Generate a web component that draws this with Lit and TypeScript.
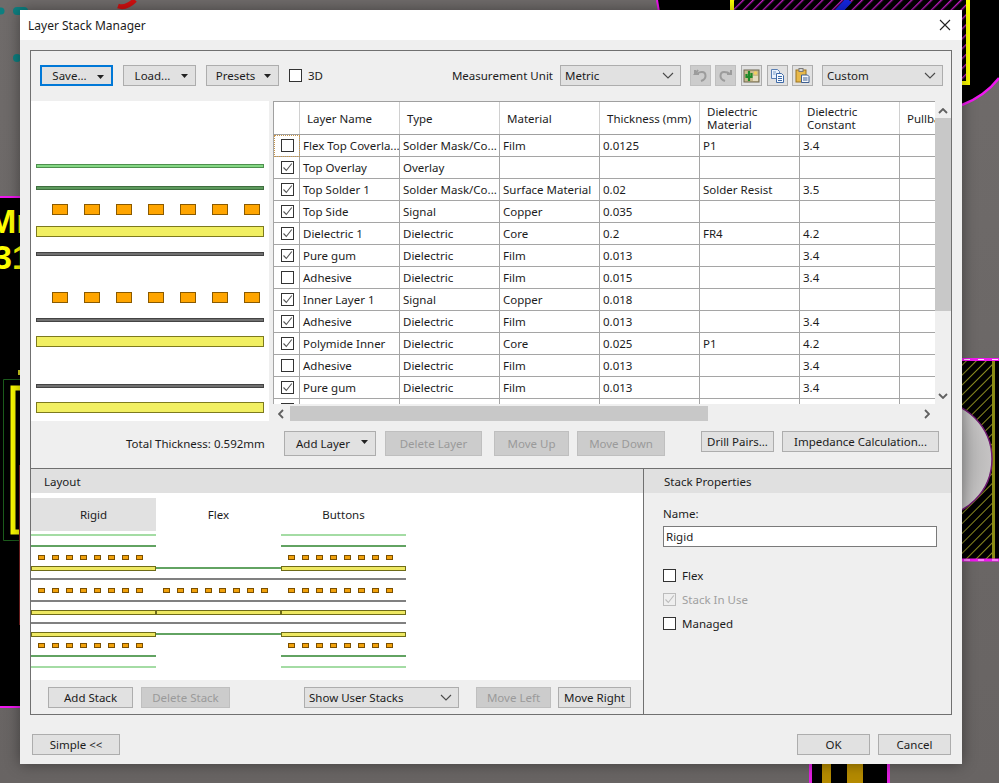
import { LitElement, html, css, svg } from "lit";
import { customElement } from "lit/decorators.js";

const rows = [
  ["Flex Top Coverla...", "Solder Mask/Co...", "Film", "0.0125", "P1", "3.4", 0],
  ["Top Overlay", "Overlay", "", "", "", "", 1],
  ["Top Solder 1", "Solder Mask/Co...", "Surface Material", "0.02", "Solder Resist", "3.5", 1],
  ["Top Side", "Signal", "Copper", "0.035", "", "", 1],
  ["Dielectric 1", "Dielectric", "Core", "0.2", "FR4", "4.2", 1],
  ["Pure gum", "Dielectric", "Film", "0.013", "", "3.4", 1],
  ["Adhesive", "Dielectric", "Film", "0.015", "", "3.4", 0],
  ["Inner Layer 1", "Signal", "Copper", "0.018", "", "", 1],
  ["Adhesive", "Dielectric", "Film", "0.013", "", "3.4", 1],
  ["Polymide Inner", "Dielectric", "Core", "0.025", "P1", "4.2", 1],
  ["Adhesive", "Dielectric", "Film", "0.013", "", "3.4", 0],
  ["Pure gum", "Dielectric", "Film", "0.013", "", "3.4", 1],
  ["", "", "", "", "", "", 1],
];

const G1 = ["#84d884", "#4f8f4f"];
const G2 = ["#5d9a5d", "#3f6f3f"];
const Y = ["#f1ef62", "#7d7a1e"];
const K = ["#707070", "#444444"];
const O = ["#ffa500", "#8a5a00"];

const bar = (x: number, y: number, w: number, h: number, c: string[]) =>
  svg`<rect x=${x + 0.5} y=${y + 0.5} width=${w - 1} height=${h - 1} fill=${c[0]} stroke=${c[1]} />`;

const previewPads = (y: number) =>
  [0, 1, 2, 3, 4, 5, 6].map((i) => bar(21 + i * 32, y, 16, 11, O));

const stackPads = (x: number, y: number) =>
  [0, 1, 2, 3, 4, 5, 6, 7].map((i) => bar(x + i * 14, y, 7, 5, ["#f2a20c", "#7a4f00"]));

const line = (x: number, y: number, w: number, c: string) =>
  svg`<rect x=${x} y=${y} width=${w} height="2" fill=${c} />`;

const ybar = (x: number, y: number, w: number) => bar(x, y, w, 5, ["#eee862", "#6f6c18"]);

const chevron = html`<svg class="chev" width="12" height="7" viewBox="0 0 12 7"><path d="M1 1l5 5 5-5" fill="none" stroke="#4a4a4a" stroke-width="1.1"/></svg>`;
const caret = html`<svg class="caret" width="7" height="4" viewBox="0 0 7 4"><path d="M0 0h7L3.500 4z" fill="#222"/></svg>`;

@customElement("app-root")
export class AppRoot extends LitElement {
  static styles = css`
    :host { display: block; position: relative; width: 999px; height: 783px; overflow: hidden; background: #6c6866;
      font-family: "Noto Sans", "Open Sans", sans-serif; font-size: 11.5px; color: #1c1c1c; }
    .canvas { position: absolute; left: 0; top: 0; display: block; }
    .dialog { position: absolute; left: 20px; top: 10px; width: 942px; height: 754px; background: #efefef;
      box-shadow: 0 0 14px rgba(0,0,0,.4); display: flex; flex-direction: column; }
    .title { height: 30px; background: #fff; display: flex; align-items: center; justify-content: space-between;
      padding: 0 11px 0 8px; font-size: 12px; flex: none; }
    .close { display: block; }
    .frame { margin: 10px 10px 0; height: 665px; box-sizing: border-box; border: 1px solid #707070; display: flex; flex-direction: column; }
    .toolbar { height: 21px; margin-top: 14px; padding: 0 8px 0 9px; display: flex; align-items: center; flex: none; }
    .btn { box-sizing: border-box; height: 21px; border: 1px solid #adadad; background: #e1e1e1; font: inherit; color: inherit;
      display: flex; align-items: center; justify-content: center; padding: 0; position: relative; flex: none; }
    .btn.off { background: #cccccc; border-color: #bfbfbf; color: #9a9a9a; }
    .btn.focus { border: 2px solid #0078d7; }
    .btn .caret { position: absolute; right: 7px; top: 8px; }
    .btn .lbl { margin-right: 14px; }
    .tool { width: 73px; margin-right: 10px; }
    .check { display: flex; align-items: center; gap: 6px; }
    .box { box-sizing: border-box; width: 13px; height: 13px; border: 1px solid #333; background: #fff; display: block; flex: none; }
    .box svg { display: block; }
    .box.dim { border-color: #bcbcbc; background: #efefef; }
    .dim-text { color: #a0a0a0; }
    .spacer { flex: 1; }
    .unit { margin-right: 7px; }
    .select { box-sizing: border-box; height: 21px; border: 1px solid #adadad; background: #e1e1e1; display: flex; align-items: center;
      justify-content: space-between; padding: 0 6px 0 4px; flex: none; }
    .select.metric { width: 121px; }
    .select.custom { width: 121px; margin-left: 9px; }
    .select.user { width: 155px; background: #e1e1e1; margin-left: 74px; }
    .ico { width: 21px; }
    .ico svg { display: block; }
    .i1 { margin-left: 9px; } .i2 { margin-left: 4px; } .i3 { margin-left: 5px; } .i4 { margin-left: 5px; } .i5 { margin-left: 4px; }
    .main { display: grid; grid-template-columns: 238px 678px; column-gap: 4px; height: 320px; margin-top: 15px; flex: none; }
    .preview { background: #fff; display: block; }
    .grid { display: grid; grid-template-columns: 662px 16px; grid-template-rows: 304px 16px; }
    .tablewrap { overflow: hidden; background: #fff; height: 303px; }
    table { border-collapse: collapse; table-layout: fixed; width: 727px; }
    th { height: 33px; box-sizing: border-box; padding: 0 0 0 7px; font-weight: 400; text-align: left; line-height: 13px;
      border-top: 1px solid #a0a0a0; border-bottom: 1px solid #a0a0a0; border-left: 1px solid #d0d0d0; white-space: nowrap; overflow: hidden; }
    th:first-child { border-left: 1px solid #a0a0a0; }
    td { height: 22px; box-sizing: border-box; padding: 0 0 0 3px; border-bottom: 1px solid #a5a5a5; border-left: 1px solid #a5a5a5;
      white-space: nowrap; overflow: hidden; }
    td.c { padding: 0 0 0 7px; }
    td.sel { outline: 1px dotted #c9964a; outline-offset: -1px; }
    .vbar { background: #efefef; display: flex; flex-direction: column; align-items: center; position: relative; height: 304px; margin-left: 0; }
    .thumb { background: #c8c8c8; }
    .vthumb { width: 16px; height: 193px; margin-top: 17px; }
    .arrow { display: block; }
    .vbar .up { position: absolute; top: 7px; left: 3px; }
    .vbar .down { position: absolute; top: 292px; left: 3px; }
    .hbar { grid-column: 1 / 3; display: flex; align-items: center; height: 16px; position: relative; }
    .hthumb { width: 418px; height: 15px; margin-left: 17px; }
    .hbar .left { position: absolute; left: 5px; top: 4px; }
    .hbar .right { position: absolute; left: 651px; top: 4px; }
    .actions { display: flex; align-items: center; height: 25px; margin-top: 10px; flex: none; }
    .total { width: 253px; box-sizing: border-box; padding-left: 95px; white-space: nowrap; }
    .tall { height: 25px; }
    .addl { width: 92px; }
    .dell { width: 97px; margin-left: 9px; }
    .mup { width: 75px; margin-left: 12px; }
    .mdown { width: 88px; margin-left: 8px; }
    .drill { width: 73px; margin-left: 36px; height: 21px; align-self: flex-start; }
    .imp { width: 157px; margin-left: 8px; height: 21px; align-self: flex-start; }
    .split { margin-top: 12px; border-top: 1px solid #707070; display: grid; grid-template-columns: 612px 308px; flex: 1; min-height: 0; }
    .panel { display: flex; flex-direction: column; min-width: 0; }
    .panel.right { border-left: 1px solid #707070; }
    .head { height: 24px; background: #e0e0e0; display: flex; align-items: center; flex: none; }
    .left-head { padding-left: 13px; }
    .right-head { padding-left: 20px; }
    .stacks { background: #fff; height: 187px; flex: none; padding-top: 5px; box-sizing: border-box; }
    .tabs { display: flex; height: 33px; }
    .tab { width: 125px; display: flex; align-items: center; justify-content: center; }
    .tab.on { background: #e1e1e1; }
    .stacksvg { display: block; margin-top: 3px; }
    .stackbtns { display: flex; align-items: center; height: 21px; margin-top: 7px; padding-left: 17px; }
    .adds { width: 85px; }
    .dels { width: 89px; margin-left: 8px; }
    .mleft { width: 75px; margin-left: 17px; }
    .mright { width: 73px; margin-left: 7px; }
    .form { padding: 13px 0 0 19px; display: flex; flex-direction: column; }
    .name { height: 14px; display: flex; align-items: center; }
    .input { box-sizing: border-box; width: 274px; height: 21px; border: 1px solid #7a7a7a; background: #fff; margin-top: 6px;
      display: flex; align-items: center; padding-left: 2px; margin-bottom: 22px; }
    .form .check { height: 13px; margin-bottom: 11px; }
    .bottom { display: flex; align-items: center; padding: 19px 11px 0 12px; }
    .simple { width: 88px; }
    .ok { width: 73px; }
    .cancel { width: 73px; margin-left: 8px; }
  `;

  private box(on: unknown, dim = false) {
    return html`<span class="box ${dim ? "dim" : ""}">${on
      ? html`<svg width="11" height="11" viewBox="0 0 11 11"><path d="M1.500 5.500l2.800 3 5.500-7" fill="none" stroke=${dim ? "#bcbcbc" : "#555"} stroke-width="1.1"/></svg>`
      : ""}</span>`;
  }

  private canvas() {
    return html`<svg class="canvas" width="999" height="783" viewBox="0 0 999 783">
      <defs>
        <pattern id="hm" width="7" height="7" patternUnits="userSpaceOnUse" patternTransform="rotate(45)">
          <rect width="7" height="7" fill="#000"/><rect width="1.400" height="7" fill="#c81cc8"/>
        </pattern>
        <pattern id="hy" width="7" height="7" patternUnits="userSpaceOnUse" patternTransform="rotate(45)">
          <rect width="7" height="7" fill="#000"/><rect width="1" height="7" fill="#8c8c20"/>
        </pattern>
        <radialGradient id="hole" cx="0.3" cy="0.5" r="0.7"><stop offset="0.5" stop-color="#a8a8a8"/><stop offset="1" stop-color="#c6c4c4"/></radialGradient>
        <linearGradient id="bgv" x1="0" y1="0" x2="0" y2="1"><stop offset="0" stop-color="#6f6b6a"/><stop offset="1" stop-color="#686463"/></linearGradient>
      </defs>
      <rect width="999" height="783" fill="url(#bgv)"/>
      <circle cx="1" cy="11" r="3.500" fill="#0d7f80"/>
      <rect x="13" y="7" width="15" height="8" rx="4" fill="#0d7f80"/>
      <rect x="13" y="54" width="8" height="8" rx="4" fill="#0d7f80"/>
      <path d="M118 6c6 2 12-1 17-6" stroke="#d01010" stroke-width="5" fill="none"/>

      <rect x="0" y="197" width="20" height="511" fill="#000"/>
      <line x1="0" y1="197" x2="20" y2="197" stroke="#f018f0" stroke-width="2"/>
      <line x1="0" y1="707" x2="20" y2="707" stroke="#f018f0" stroke-width="2"/>
      <text x="-12" y="233" fill="#ffff00" font-family="Liberation Sans" font-weight="700" font-size="34">Mr</text>
      <text x="-7" y="269" fill="#ffff00" font-family="Liberation Sans" font-weight="700" font-size="34">31</text>
      <path d="M20 379.500H3.500V540.500H20" fill="none" stroke="#1c5c1c"/>
      <path d="M20 388H13V532H20" fill="none" stroke="#ffff00" stroke-width="5"/>
      <rect x="18" y="370" width="2" height="5" fill="#d8d820"/>
      <line x1="19.500" y1="465" x2="19.500" y2="625" stroke="#7a2020"/>

      <path d="M657 0Q658 6 659 12H962V105Q985 96 999 78V0Z" fill="#000"/>
      <path d="M657 0Q658 6 659 12" stroke="#f018f0" stroke-width="2" fill="none"/>
      <rect x="734" y="0" width="232" height="12" fill="url(#hm)"/>
      <rect x="962" y="0" width="4" height="84" fill="url(#hm)"/>
      <rect x="730" y="0" width="4" height="12" fill="#ffff00"/>
      <path d="M962 83H968V0" stroke="#ffff00" stroke-width="4" fill="none"/>
      <path d="M836 14L849 0" stroke="#1426e0" stroke-width="7"/>
      <path d="M962 105Q985 96 999 78" stroke="#f018f0" stroke-width="2.500" fill="none"/>

      <rect x="962" y="359" width="37" height="201" fill="#000"/>
      <rect x="962" y="360" width="30" height="199" fill="url(#hy)"/>
      <rect x="992" y="360" width="3" height="199" fill="#8a8a14"/>
      <line x1="962" y1="359.500" x2="999" y2="359.500" stroke="#f018f0" stroke-width="3"/>
      <line x1="964" y1="359.500" x2="999" y2="359.500" stroke="#ffd8ff" stroke-width="1" stroke-dasharray="6 8"/>
      <line x1="962" y1="560" x2="999" y2="560" stroke="#f018f0" stroke-width="3"/>
      <line x1="964" y1="560" x2="999" y2="560" stroke="#ffd8ff" stroke-width="1" stroke-dasharray="6 8"/>
      <circle cx="934" cy="459" r="58" fill="url(#hole)" stroke="#701a70" stroke-width="1.500"/>

      <rect x="810" y="764" width="80" height="19" fill="#000"/>
      <rect x="822" y="764" width="9" height="19" fill="#b48a00"/>
      <rect x="847" y="764" width="16" height="19" fill="#b48a00"/>
      <rect x="809" y="764" width="3" height="19" fill="#e020e0"/>
      <rect x="887" y="764" width="3" height="19" fill="#e020e0"/>
    </svg>`;
  }

  private preview() {
    return html`<svg class="preview" width="238" height="320" viewBox="0 0 238 320">
      ${bar(5, 63, 228, 4, G1)}
      ${bar(5, 85, 228, 4, G2)}
      ${previewPads(103)}
      ${bar(5, 125, 228, 11, Y)}
      ${bar(5, 151, 228, 4, K)}
      ${previewPads(191)}
      ${bar(5, 217, 228, 4, K)}
      ${bar(5, 235, 228, 11, Y)}
      ${bar(5, 283, 228, 4, K)}
      ${bar(5, 301, 228, 11, Y)}
    </svg>`;
  }

  private stacks() {
    const light = "#a4dca4", dark = "#62a362", grey = "#808080";
    const col1 = 0, col2 = 125, col3 = 250;
    return html`<svg class="stacksvg" width="611" height="146" viewBox="0 0 611 146">
      ${line(col1, 0, 125, light)}${line(col3, 0, 125, light)}
      ${line(col1, 11, 125, dark)}${line(col3, 11, 125, dark)}
      ${stackPads(col1 + 7, 21)}${stackPads(col3 + 7, 21)}
      ${ybar(col1, 32, 125)}${line(col2, 33, 125, dark)}${ybar(col3, 32, 125)}
      ${line(col1, 44, 375, grey)}
      ${stackPads(col1 + 7, 54)}${stackPads(col2 + 7, 54)}${stackPads(col3 + 7, 54)}
      ${line(col1, 66, 375, grey)}
      ${ybar(col1, 76, 125)}${ybar(col2, 76, 125)}${ybar(col3, 76, 125)}
      ${line(col1, 88, 375, grey)}
      ${ybar(col1, 98, 125)}${line(col2, 99, 125, dark)}${ybar(col3, 98, 125)}
      ${stackPads(col1 + 7, 109)}${stackPads(col3 + 7, 109)}
      ${line(col1, 121, 125, dark)}${line(col3, 121, 125, dark)}
      ${line(col1, 132, 125, light)}${line(col3, 132, 125, light)}
    </svg>`;
  }

  render() {
    return html`
      ${this.canvas()}
      <div class="dialog">
        <div class="title">
          <span>Layer Stack Manager</span>
          <svg class="close" width="12" height="12" viewBox="0 0 12 12"><path d="M1 1l10 10M11 1L1 11" stroke="#222" stroke-width="1.100" fill="none"/></svg>
        </div>
        <div class="frame">
          <div class="toolbar">
            <button class="btn tool focus"><span class="lbl">Save...</span>${caret}</button>
            <button class="btn tool"><span class="lbl">Load...</span>${caret}</button>
            <button class="btn tool"><span class="lbl">Presets</span>${caret}</button>
            <span class="check">${this.box(0)}<span>3D</span></span>
            <span class="spacer"></span>
            <span class="unit">Measurement Unit</span>
            <div class="select metric"><span>Metric</span>${chevron}</div>
            <button class="btn ico off i1"><svg width="15" height="15" viewBox="0 0 15 15"><path d="M5 2L2 6h2.500v0C5 5 7 4 9 4c2.500 0 3.500 2 3.500 4S11 12 8 13" fill="none" stroke="#9c9c9c" stroke-width="2"/><path d="M2 2v4h4" fill="none" stroke="#9c9c9c" stroke-width="2"/></svg></button>
            <button class="btn ico off i2"><svg width="15" height="15" viewBox="0 0 15 15"><path d="M13 2v4H9" fill="none" stroke="#9c9c9c" stroke-width="2"/><path d="M12 6C10 4 8 4 6 4 3.500 4 2.500 6 2.500 8S4 12 7 13" fill="none" stroke="#9c9c9c" stroke-width="2"/></svg></button>
            <button class="btn ico i3"><svg width="17" height="17" viewBox="0 0 17 17"><rect x="1" y="3" width="15" height="12" fill="#c9b98c" stroke="#6d6650"/><circle cx="12.500" cy="6" r="1.800" fill="#f0d060"/><path d="M6 14V4M3.500 7v3h5V6" fill="none" stroke="#1f8a2a" stroke-width="2.200"/><rect x="10" y="9" width="5" height="5" fill="#e6dcc0"/></svg></button>
            <button class="btn ico i4"><svg width="17" height="17" viewBox="0 0 17 17"><path d="M2.500 2.500h6l2 2v7h-8z" fill="#eaf2fc" stroke="#5a7fb4"/><path d="M7.500 6.500h5l2 2v7h-7z" fill="#f7fbff" stroke="#3f6aa8"/><path d="M9 9.500h4M9 11.500h4M9 13.500h4" stroke="#3f6aa8"/><path d="M4 5h3M4 7h2.500" stroke="#7a9cc8"/></svg></button>
            <button class="btn ico i5"><svg width="17" height="17" viewBox="0 0 17 17"><rect x="2" y="3" width="10" height="12" fill="#e8b94a" stroke="#9c7420"/><rect x="5" y="1.500" width="4" height="3" fill="#d8d8d8" stroke="#7a7a7a"/><path d="M7.500 8h6l1.500 1.500v6h-7.500z" fill="#f5f8fc" stroke="#3f5f90"/><path d="M9 11h4.500M9 13h4.500" stroke="#3f5f90"/></svg></button>
            <div class="select custom"><span>Custom</span>${chevron}</div>
          </div>

          <div class="main">
            ${this.preview()}
            <div class="grid">
              <div class="tablewrap">
                <table>
                  <colgroup><col width="26"/><col width="100"/><col width="100"/><col width="100"/><col width="100"/><col width="100"/><col width="100"/><col width="101"/></colgroup>
                  <thead><tr>
                    <th></th><th>Layer Name</th><th>Type</th><th>Material</th><th>Thickness (mm)</th>
                    <th>Dielectric<br/>Material</th><th>Dielectric<br/>Constant</th><th>Pullback</th>
                  </tr></thead>
                  <tbody>
                    ${rows.map((r, i) => html`<tr>
                      <td class="c ${i === 0 ? "sel" : ""}">${this.box(r[6])}</td>
                      <td>${r[0]}</td><td>${r[1]}</td><td>${r[2]}</td><td>${r[3]}</td><td>${r[4]}</td><td>${r[5]}</td><td></td>
                    </tr>`)}
                  </tbody>
                </table>
              </div>
              <div class="vbar">
                <svg class="arrow up" width="10" height="6" viewBox="0 0 10 6"><path d="M1 5l4-4 4 4" fill="none" stroke="#606060" stroke-width="1.800"/></svg>
                <div class="thumb vthumb"></div>
                <svg class="arrow down" width="10" height="6" viewBox="0 0 10 6"><path d="M1 1l4 4 4-4" fill="none" stroke="#606060" stroke-width="1.800"/></svg>
              </div>
              <div class="hbar">
                <svg class="arrow left" width="6" height="10" viewBox="0 0 6 10"><path d="M5 1L1 5l4 4" fill="none" stroke="#606060" stroke-width="1.800"/></svg>
                <div class="thumb hthumb"></div>
                <svg class="arrow right" width="6" height="10" viewBox="0 0 6 10"><path d="M1 1l4 4-4 4" fill="none" stroke="#606060" stroke-width="1.800"/></svg>
              </div>
            </div>
          </div>

          <div class="actions">
            <span class="total">Total Thickness: 0.592mm</span>
            <button class="btn tall addl"><span class="lbl">Add Layer</span>${caret}</button>
            <button class="btn tall off dell">Delete Layer</button>
            <button class="btn tall off mup">Move Up</button>
            <button class="btn tall off mdown">Move Down</button>
            <button class="btn drill">Drill Pairs...</button>
            <button class="btn imp">Impedance Calculation...</button>
          </div>

          <div class="split">
            <div class="panel">
              <div class="head left-head">Layout</div>
              <div class="stacks">
                <div class="tabs">
                  <div class="tab on">Rigid</div><div class="tab">Flex</div><div class="tab">Buttons</div>
                </div>
                ${this.stacks()}
              </div>
              <div class="stackbtns">
                <button class="btn adds">Add Stack</button>
                <button class="btn off dels">Delete Stack</button>
                <div class="select user"><span>Show User Stacks</span>${chevron}</div>
                <button class="btn off mleft">Move Left</button>
                <button class="btn mright">Move Right</button>
              </div>
            </div>
            <div class="panel right">
              <div class="head right-head">Stack Properties</div>
              <div class="form">
                <span class="name">Name:</span>
                <div class="input">Rigid</div>
                <span class="check">${this.box(0)}<span>Flex</span></span>
                <span class="check">${this.box(1, true)}<span class="dim-text">Stack In Use</span></span>
                <span class="check">${this.box(0)}<span>Managed</span></span>
              </div>
            </div>
          </div>
        </div>
        <div class="bottom">
          <button class="btn simple">Simple &lt;&lt;</button>
          <span class="spacer"></span>
          <button class="btn ok">OK</button>
          <button class="btn cancel">Cancel</button>
        </div>
      </div>
    `;
  }
}
